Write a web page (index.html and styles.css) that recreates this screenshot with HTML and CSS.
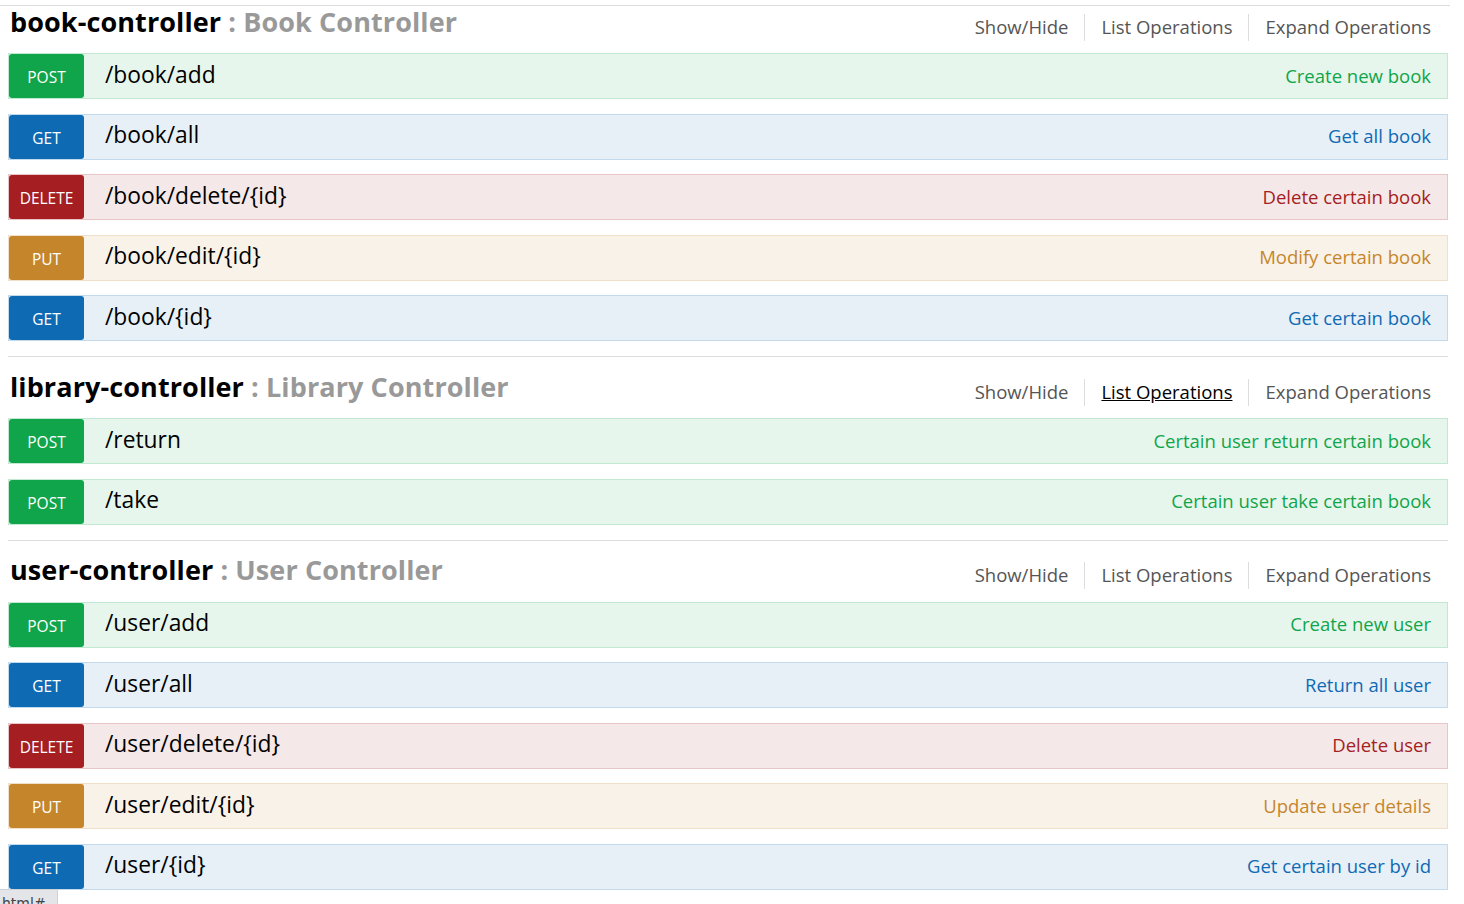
FILE: index.html
```html
<!DOCTYPE html>
<html lang="en">
<head>
<meta charset="utf-8">
<title>Swagger UI</title>
<link rel="stylesheet" href="styles.css">
</head>
<body>
<div class="top-line"></div>
<ul class="resources">
  <li class="resource first">
    <div class="resource-head">
      <h2><span class="tag">book-controller</span><span class="tag-desc"> : Book Controller</span></h2>
      <ul class="options">
        <li><a href="#">Show/Hide</a></li>
        <li><a href="#">List Operations</a></li>
        <li><a href="#">Expand Operations</a></li>
      </ul>
    </div>
    <ul class="endpoints">
      <li class="op post"><span class="method">POST</span><span class="path">/book/add</span><span class="summary">Create new book</span></li>
      <li class="op get"><span class="method">GET</span><span class="path">/book/all</span><span class="summary">Get all book</span></li>
      <li class="op delete"><span class="method">DELETE</span><span class="path">/book/delete/{id}</span><span class="summary">Delete certain book</span></li>
      <li class="op put"><span class="method">PUT</span><span class="path">/book/edit/{id}</span><span class="summary">Modify certain book</span></li>
      <li class="op get"><span class="method">GET</span><span class="path">/book/{id}</span><span class="summary">Get certain book</span></li>
    </ul>
  </li>
  <li class="resource">
    <div class="resource-head">
      <h2><span class="tag">library-controller</span><span class="tag-desc"> : Library Controller</span></h2>
      <ul class="options">
        <li><a href="#">Show/Hide</a></li>
        <li><a href="#" class="hover">List Operations</a></li>
        <li><a href="#">Expand Operations</a></li>
      </ul>
    </div>
    <ul class="endpoints">
      <li class="op post"><span class="method">POST</span><span class="path">/return</span><span class="summary">Certain user return certain book</span></li>
      <li class="op post"><span class="method">POST</span><span class="path">/take</span><span class="summary">Certain user take certain book</span></li>
    </ul>
  </li>
  <li class="resource last">
    <div class="resource-head">
      <h2><span class="tag">user-controller</span><span class="tag-desc"> : User Controller</span></h2>
      <ul class="options">
        <li><a href="#">Show/Hide</a></li>
        <li><a href="#">List Operations</a></li>
        <li><a href="#">Expand Operations</a></li>
      </ul>
    </div>
    <ul class="endpoints">
      <li class="op post"><span class="method">POST</span><span class="path">/user/add</span><span class="summary">Create new user</span></li>
      <li class="op get"><span class="method">GET</span><span class="path">/user/all</span><span class="summary">Return all user</span></li>
      <li class="op delete"><span class="method">DELETE</span><span class="path">/user/delete/{id}</span><span class="summary">Delete user</span></li>
      <li class="op put"><span class="method">PUT</span><span class="path">/user/edit/{id}</span><span class="summary">Update user details</span></li>
      <li class="op get"><span class="method">GET</span><span class="path">/user/{id}</span><span class="summary">Get certain user by id</span></li>
    </ul>
  </li>
</ul>
<div class="status-bar">html#</div>
</body>
</html>
```

FILE: styles.css
```css
html, body {
  margin: 0;
  padding: 0;
  background: #fff;
  overflow: hidden;
}
body {
  font-family: "Open Sans", "DejaVu Sans", sans-serif;
  color: #000;
}
ul {
  list-style: none;
  margin: 0;
  padding: 0;
}
.top-line {
  margin-top: 5px;
  height: 1px;
  width: 1450px;
  background: #dddddd;
}
.resources {
  padding-left: 8px;
  width: 1440px;
}
.resource {
  border-bottom: 1px solid #dddddd;
  padding-bottom: 15px;
}
.resource.last {
  border-bottom: none;
}
.resource-head {
  display: flex;
  align-items: center;
  justify-content: space-between;
  height: 61px;
  box-sizing: border-box;
}
.resource.first .resource-head {
  height: 47px;
  padding-bottom: 14px;
}
.resource-head h2 {
  margin: 0;
  padding-left: 2px;
  font-size: 27px;
  font-weight: 700;
  line-height: 32px;
  margin-top: -2px;
  letter-spacing: 0.1px;
}
.tag {
  color: #000;
}
.tag-desc {
  color: #999999;
}
.options {
  display: flex;
  align-items: center;
  padding-right: 1px;
  padding-top: 9px;
}
.options li {
  padding: 0 16px;
  line-height: 25px;
  border-left: 1px solid #dddddd;
}
.options li:first-child {
  border-left: none;
}
.options a {
  color: #555555;
  text-decoration: none;
  font-size: 18.5px;
}
.options a.hover {
  color: #000;
  text-decoration: underline;
}
.endpoints {
  display: flex;
  flex-direction: column;
  gap: 14.5px;
}
.op {
  display: flex;
  align-items: center;
  height: 46px;
  box-sizing: border-box;
  border: 1px solid;
}
.method {
  width: 75px;
  height: 44px;
  box-sizing: border-box;
  padding-top: 2px;
  display: flex;
  align-items: center;
  justify-content: center;
  color: #fff;
  font-size: 15.5px;
  border-radius: 3px;
  flex-shrink: 0;
}
.path {
  padding-left: 21px;
  padding-bottom: 4px;
  font-size: 22.8px;
  color: #000;
  flex: 1;
}
.summary {
  padding-right: 16px;
  padding-bottom: 2px;
  font-size: 18.5px;
}
.post { background: #e7f6ec; border-color: #c3e8d1; }
.post .method { background: #10a54a; }
.post .summary { color: #10a54a; }
.get { background: #e7f0f7; border-color: #c3d9ec; }
.get .method { background: #0f6ab4; }
.get .summary { color: #0f6ab4; }
.delete { background: #f5e8e8; border-color: #e8c6c7; }
.delete .method { background: #a41e22; }
.delete .summary { color: #a41e22; }
.put { background: #f9f2e9; border-color: #f0e0ca; }
.put .method { background: #c5862b; }
.put .summary { color: #c5862b; }

.status-bar {
  position: fixed;
  left: 0;
  bottom: 0;
  width: 58px;
  height: 15px;
  box-sizing: border-box;
  background: #e3e5e8;
  border-top: 1px solid #cfd2d6;
  border-right: 1px solid #cfd2d6;
  border-top-right-radius: 2px;
  font-family: "DejaVu Sans", sans-serif;
  font-size: 14px;
  line-height: 14px;
  padding-left: 2px;
  padding-top: 6px;
  color: #444;
  overflow: hidden;
}
```
